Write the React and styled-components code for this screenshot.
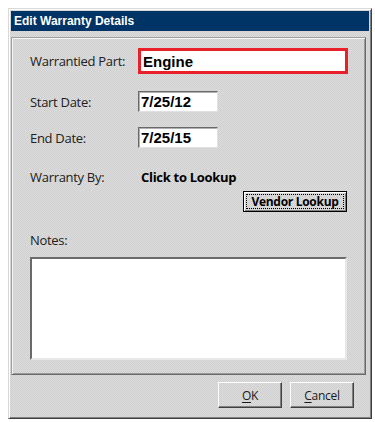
import React from "react";
import styled, { createGlobalStyle } from "styled-components";

const GlobalStyle = createGlobalStyle`
  html, body {
    margin: 0;
    padding: 0;
    background: #ffffff;
  }
`;

const dither = `repeating-conic-gradient(#dcdcdc 0 25%, #d0d0d0 0 50%) 0 0 / 2px 2px`;

const Window = styled.div`
  margin: 8px 0 0 8px;
  width: 364px;
  height: 411px;
  box-sizing: border-box;
  border: 1px solid;
  border-color: #d8d8d8 #404040 #404040 #d8d8d8;
  box-shadow: inset 1px 1px 0 #ffffff, inset -1px -1px 0 #808080;
  background: ${dither};
  padding: 2px;
  display: flex;
  flex-direction: column;
  font-family: "Open Sans", "Noto Sans", sans-serif;
`;

const TitleBar = styled.div`
  height: 20px;
  background: #003366;
  color: #ffffff;
  font-family: "Liberation Sans", Arial, sans-serif;
  font-weight: 700;
  font-size: 12px;
  display: flex;
  align-items: center;
  padding-left: 3px;
`;

const Panel = styled.div`
  margin: 6px 3px 0 0;
  height: 338px;
  box-sizing: border-box;
  border: 1px solid;
  border-color: #a0a0a0 #6a6a6a #6a6a6a #a0a0a0;
  box-shadow: inset 1px 1px 0 #f4f4f4, inset -1px -1px 0 #9a9a9a;
  padding: 10px 14px 0 18px;
  display: flex;
  flex-direction: column;
`;

const Row = styled.div`
  display: grid;
  grid-template-columns: 108px 1fr;
  align-items: center;
  margin-top: ${(p) => p.$top || 0}px;
`;

const Label = styled.span`
  font-size: 13px;
  color: #202020;
  letter-spacing: -0.3px;
`;

const Field = styled.div`
  box-sizing: border-box;
  width: ${(p) => p.$width}px;
  height: ${(p) => (p.$focus ? 26 : 21)}px;
  background: #ffffff;
  border: ${(p) => (p.$focus ? "3px solid #e8202a" : "1px solid")};
  border-color: ${(p) => (p.$focus ? "#e8202a" : "#6a6a6a #e0e0e0 #e0e0e0 #6a6a6a")};
  box-shadow: ${(p) => (p.$focus ? "none" : "inset 1px 1px 0 #b0b0b0")};
  font-family: "Liberation Sans", Arial, sans-serif;
  font-weight: 700;
  font-size: 15px;
  color: #000;
  display: flex;
  align-items: center;
  padding-left: 2px;
`;

const BoldText = styled.span`
  font-size: 13px;
  font-weight: 700;
  color: #000;
  letter-spacing: -0.3px;
  margin-left: 3px;
`;

const ButtonRow = styled.div`
  display: flex;
  justify-content: flex-end;
  margin-top: ${(p) => p.$top || 0}px;
  padding-right: ${(p) => p.$right || 0}px;
`;

const DefaultButton = styled.button`
  width: 104px;
  height: 21px;
  box-sizing: border-box;
  padding: 2px;
  border: 1px solid #000;
  background: ${dither};
  box-shadow: inset 1px 1px 0 #ffffff, inset -1px -1px 0 #808080;
  font-family: "Open Sans", "Noto Sans", sans-serif;
  font-weight: 700;
  font-size: 12px;
  letter-spacing: -0.3px;
  color: #000;
  display: flex;
`;

const FocusRect = styled.span`
  flex: 1;
  border: 1px dotted #000;
  display: flex;
  align-items: center;
  justify-content: center;
`;

const Button = styled.button`
  width: 64px;
  height: 26px;
  box-sizing: border-box;
  border: 1px solid;
  border-color: #ffffff #404040 #404040 #ffffff;
  box-shadow: inset -1px -1px 0 #808080;
  background: ${dither};
  font-family: "Open Sans", "Noto Sans", sans-serif;
  font-size: 12px;
  letter-spacing: -0.3px;
  color: #1a1a1a;
  padding: 0;
  & u {
    text-underline-offset: 2px;
  }
`;

const Notes = styled.div`
  margin-top: 8px;
  width: 317px;
  height: 103px;
  box-sizing: border-box;
  background: #ffffff;
  border: 2px solid;
  border-color: #6a6a6a #e8e8e8 #e8e8e8 #6a6a6a;
`;

const Footer = styled.div`
  display: flex;
  justify-content: flex-end;
  gap: 8px;
  margin-top: 7px;
  padding-right: 15px;
`;

export default function App() {
  return (
    <>
      <GlobalStyle />
      <Window>
        <TitleBar>Edit Warranty Details</TitleBar>
        <Panel>
          <Row>
            <Label>Warrantied Part:</Label>
            <Field $focus $width={210}>Engine</Field>
          </Row>
          <Row $top={17}>
            <Label>Start Date:</Label>
            <Field $width={80}>7/25/12</Field>
          </Row>
          <Row $top={15}>
            <Label>End Date:</Label>
            <Field $width={80}>7/25/15</Field>
          </Row>
          <Row $top={20}>
            <Label>Warranty By:</Label>
            <BoldText>Click to Lookup</BoldText>
          </Row>
          <ButtonRow $top={5} $right={4}>
            <DefaultButton>
              <FocusRect>Vendor Lookup</FocusRect>
            </DefaultButton>
          </ButtonRow>
          <Row $top={19}>
            <Label>Notes:</Label>
          </Row>
          <Notes />
        </Panel>
        <Footer>
          <Button>
            <u>O</u>K
          </Button>
          <Button>
            <u>C</u>ancel
          </Button>
        </Footer>
      </Window>
    </>
  );
}
